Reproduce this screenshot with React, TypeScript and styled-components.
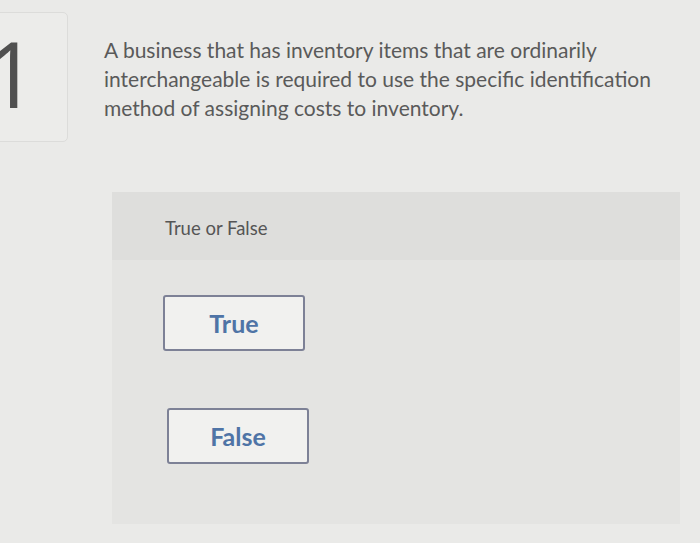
import React from 'react';
import styled, { createGlobalStyle } from 'styled-components';

const GlobalStyle = createGlobalStyle`
  html, body {
    margin: 0;
    padding: 0;
    background: #eaeae8;
  }
  body {
    font-family: Lato, 'Open Sans', sans-serif;
    color: #5b5b5b;
    overflow: hidden;
  }
`;

const Page = styled.div`
  width: 700px;
  height: 543px;
  padding-top: 12px;
  box-sizing: border-box;
`;

const QuestionRow = styled.div`
  display: flex;
  align-items: flex-start;
`;

const NumberBox = styled.div`
  flex: none;
  width: 92px;
  height: 130px;
  margin-left: -24px;
  box-sizing: border-box;
  border: 1px solid #dcdcda;
  border-radius: 5px;
  background: #ececea;
  display: flex;
  align-items: center;
  font-family: 'Open Sans', sans-serif;
  font-weight: 400;
  font-size: 92px;
  line-height: 1;
  color: #505050;
`;

const Digit = styled.span`
  margin-left: 8px;
  margin-top: -8px;
`;

const QuestionText = styled.p`
  margin: 23px 0 0 36px;
  width: 570px;
  font-size: 21px;
  line-height: 29px;
  color: #5a5a5a;
`;

const Panel = styled.div`
  margin: 50px 0 0 112px;
  width: 568px;
  height: 332px;
  background: #e4e4e2;
  display: flex;
  flex-direction: column;
`;

const PanelHeader = styled.div`
  height: 68px;
  flex: none;
  background: #dededc;
  display: flex;
  align-items: center;
  padding-left: 53px;
  padding-top: 4px;
  box-sizing: border-box;
  font-size: 18.5px;
  color: #555;
`;

const Choices = styled.div`
  display: flex;
  flex-direction: column;
  gap: 57px;
  padding: 35px 0 0 51px;
`;

const ChoiceButton = styled.button<{ $offset?: number }>`
  width: 142px;
  height: 56px;
  margin-left: ${(p) => p.$offset ?? 0}px;
  box-sizing: border-box;
  border: 2px solid #7d8196;
  border-radius: 3px;
  background: #f1f1ef;
  font-family: Lato, 'Open Sans', sans-serif;
  font-weight: 700;
  font-size: 25px;
  color: #4f74a6;
  cursor: pointer;
`;

const App = () => (
  <Page>
    <GlobalStyle />
    <QuestionRow>
      <NumberBox>
        <Digit>1</Digit>
      </NumberBox>
      <QuestionText>
        A business that has inventory items that are ordinarily interchangeable is required to
        use the specific identification method of assigning costs to inventory.
      </QuestionText>
    </QuestionRow>

    <Panel>
      <PanelHeader>True or False</PanelHeader>
      <Choices>
        <ChoiceButton>True</ChoiceButton>
        <ChoiceButton $offset={4}>False</ChoiceButton>
      </Choices>
    </Panel>
  </Page>
);

export default App;
